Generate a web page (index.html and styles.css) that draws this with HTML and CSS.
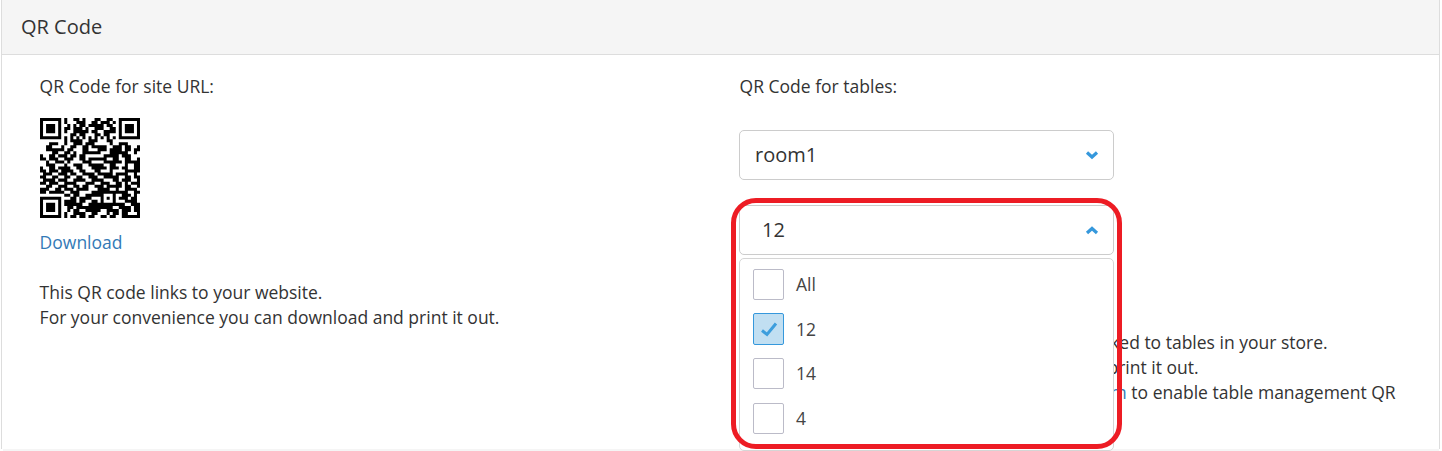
FILE: index.html
```
<!DOCTYPE html>
<html lang="en">
<head>
    <meta charset="UTF-8">
    <meta name="viewport" content="width=device-width, initial-scale=1.0">
    <title>QR Code</title>
    <link rel="stylesheet" href="styles.css">
</head>
<body>

<div class="panel">
    <div class="panel-heading">QR Code</div>

    <div class="panel-body">
        <!-- Site QR code -->
        <div class="column">
            <p>QR Code for site URL:</p>
            <svg class="qr-code" viewBox="0 0 33 33"><path id="qrPath"/></svg>
            <a href="#" class="download">Download</a>
            <p class="description">This QR code links to your website.<br>For your convenience you can download and print it out.</p>
        </div>

        <!-- Table QR codes -->
        <div class="column">
            <p>QR Code for tables:</p>
            <div class="select room-select">
                <span>room1</span>
                <svg class="arrow" viewBox="0 0 14 10"><path d="M2 2.5l5 4.5 5-4.5"/></svg>
            </div>
            <div class="select table-select">
                <span>12</span>
                <svg class="arrow" viewBox="0 0 14 10"><path d="M2 8l5-4.5 5 4.5"/></svg>

                <div class="options">
                    <label class="option"><span class="checkbox"></span>All</label>
                    <label class="option"><span class="checkbox checked"><svg viewBox="0 0 18 16"><path d="M2 9.5l5 4L16 2.5"/></svg></span>12</label>
                    <label class="option"><span class="checkbox"></span>14</label>
                    <label class="option"><span class="checkbox"></span>4</label>
                </div>
                <div class="highlight"></div>
            </div>
            <div class="table-description">
                <p class="line-store">These QR codes are linked to tables in your store.</p>
                <p class="line-print">You can download and print it out.</p>
                <p class="line-enable">Contact <a href="#">our team</a> to enable table management QR</p>
            </div>
        </div>
    </div>
</div>
<div class="next-panel"></div>

<script>
    // QR modules, one string per row
    const modules = [
        '111111101001101000110011001111111',
        '100000101000111001101110101000001',
        '101110100101011011111011001011101',
        '101110101101110100111001101011101',
        '101110101001111101100111101011101',
        '100000100011011000110110001000001',
        '111111101010101010101010101111111',
        '000000001011110011100011000000000',
        '000111001001110111000001001110000',
        '001100010011001101111100111011001',
        '001111110110001100011101111011011',
        '000011001101001111110001111110010',
        '100110111011011000000111110111000',
        '110111001110011011111100110011001',
        '001001110100001110000111111011111',
        '001110001001110011111001100010011',
        '100110111100110001111101110110011',
        '110111011110011000110001000011111',
        '011100111011001111011111011110010',
        '110011001100110011100111110011011',
        '011110111001111001111000110111001',
        '110111001111000111001110011010111',
        '001100111001101100111011111011001',
        '111001101110111100011110010011110',
        '110111110011100001111111111110011',
        '000000001101100111111000100111010',
        '111111100011011110001010101110110',
        '100000101111011001101000100011110',
        '101110101111110011111111111100111',
        '101110100110111111111111001111011',
        '101110100101100111110011110111011',
        '100000101001111001100010110110001',
        '111111101011011011001101100111111'
    ];

    // Merge neighbouring dark modules of a row into one bar
    let d = '';
    modules.forEach((row, y) => {
        for (const run of row.matchAll(/1+/g)) {
            d += `M${run.index} ${y}h${run[0].length}v1h-${run[0].length}z`;
        }
    });
    document.querySelector('#qrPath').setAttribute('d', d);
</script>

</body>
</html>
```
FILE: styles.css
```
* {
    margin: 0;
    padding: 0;
    box-sizing: border-box;
}

body {
    font-family: "Open Sans", sans-serif;
    font-size: 17.5px;
    line-height: 25px;
    color: #333;
    background-color: #fff;
    overflow: hidden;
}

a {
    color: #337ab7;
    text-decoration: none;
}

/* Panel */
.panel {
    width: 1439px;
    height: 449px;
    margin-left: 1px;
    border: 1px solid #ddd;
    border-top: none;
    border-bottom: none;
}

.panel-heading {
    height: 55px;
    padding-left: 19px;
    font-size: 20px;
    line-height: 54px;
    background-color: #f5f5f5;
    border-bottom: 1px solid #ddd;
}

.panel-body {
    display: grid;
    grid-template-columns: 700px 1fr;
    padding: 19px 0 0 37.6px;
}

.next-panel {
    width: 1436px;
    height: 10px;
    margin-left: 3px;
    background-color: #f5f5f5;
}

/* Site QR code */
.qr-code {
    display: block;
    width: 100px;
    height: 100px;
    margin: 19px 0 0 0.4px;
}

.download {
    display: block;
    margin-top: 12px;
}

.description {
    margin-top: 25px;
}

/* Selects */
.select {
    position: relative;
    display: flex;
    align-items: center;
    justify-content: space-between;
    width: 375px;
    height: 50px;
    margin-left: -0.6px;
    padding: 0 14px 0 15px;
    font-size: 20px;
    border: 1px solid #ccc;
    border-radius: 5px;
}

.select > span {
    margin-bottom: 2px;
}

.room-select {
    margin-top: 31px;
}

.table-select {
    margin-top: 25px;
    padding-left: 22px;
}

.arrow {
    width: 14px;
    height: 10px;
    fill: none;
    stroke: #3598dc;
    stroke-width: 3.2;
}

/* Open list of tables */
.options {
    position: absolute;
    z-index: 1;
    top: 52px;
    left: -1px;
    width: 375px;
    height: 193px;
    padding: 10px 13px;
    font-size: 17.5px;
    background-color: #fff;
    border: 1px solid #d5d5d5;
    border-radius: 5px;
}

.option {
    display: flex;
    align-items: center;
    height: 31px;
    margin-bottom: 13.7px;
    color: #444;
}

.checkbox {
    display: flex;
    align-items: center;
    justify-content: center;
    width: 31px;
    height: 31px;
    margin-right: 12px;
    border: 1px solid #bbbbc8;
    border-radius: 2px;
}

.checkbox.checked {
    height: 32px;
    background-color: #c1dff2;
    border-color: #3598dc;
}

.checkbox svg {
    width: 18px;
    height: 16px;
    fill: none;
    stroke: #3d9edd;
    stroke-width: 3;
}

.highlight {
    position: absolute;
    z-index: 2;
    top: -8px;
    left: -9px;
    width: 391px;
    height: 251px;
    border: 5px solid #ed1c24;
    border-radius: 25px;
}

/* Text beside the open list */
.table-description {
    margin-top: 75px;
    text-align: right;
    white-space: nowrap;
}

.line-store {
    width: 588px;
}

.line-print {
    width: 459px;
}

.line-enable {
    width: 656px;
}
```
